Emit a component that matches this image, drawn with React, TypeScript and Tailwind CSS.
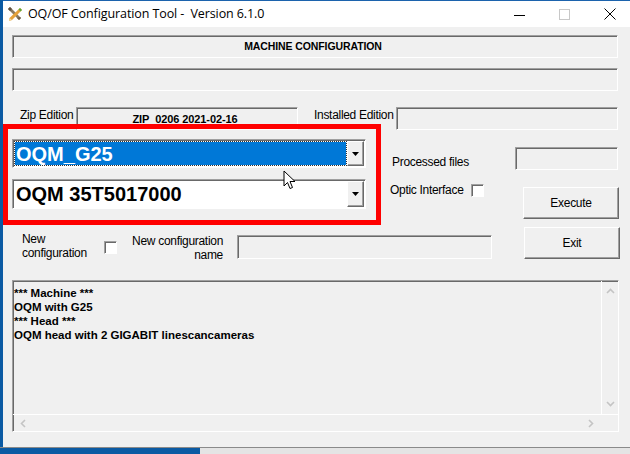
import React from "react";

const sunken =
  "border border-t-[#a0a0a0] border-l-[#a0a0a0] border-b-white border-r-white shadow-[inset_1px_1px_0_#696969]";
const raised =
  "bg-[#f0f0f0] border border-t-white border-l-white border-b-[#696969] border-r-[#696969] shadow-[inset_-1px_-1px_0_#a0a0a0]";
const label = "text-[12px] leading-[14px] tracking-[-0.3px] text-black";

function ToolIcon() {
  return (
    <svg width="17" height="17" viewBox="0 0 17 17" aria-hidden="true">
      <path d="M2 3 L4 1 L15 12 L13 14 Z" fill="#8a7b60" />
      <path d="M2 3 L4 1 L6 3 L4 5 Z" fill="#5f5040" />
      <path d="M14 2 L16 4 L6 14 L3 15 L3.5 12 Z" fill="#e6a23a" />
      <path d="M14 2 L16 4 L14.5 5.5 L12.5 3.5 Z" fill="#5aa83a" />
      <path d="M3.5 12 L6 14 L3 15 Z" fill="#f3d9a0" />
      <path d="M11 12 L13 14 L15 12 L14 11 Z" fill="#6d5c45" />
    </svg>
  );
}

function Checkbox() {
  return <div className={`w-[13px] h-[13px] bg-white ${sunken}`} />;
}

function DropButton() {
  return (
    <div
      className={`w-[17px] h-full flex items-center justify-center ${raised}`}
    >
      <svg width="7" height="4" viewBox="0 0 7 4" aria-hidden="true">
        <path d="M0 0 H7 L3.5 4 Z" fill="#000" />
      </svg>
    </div>
  );
}

function Combo({
  value,
  selected,
  h,
}: {
  value: string;
  selected?: boolean;
  h: string;
}) {
  return (
    <div className={`w-[354px] ${h} bg-white ${sunken} flex p-[1px]`}>
      <div className="flex-1 flex p-[1px]">
        <div
          className={`flex-1 flex items-center pl-[1px] font-['Liberation_Sans',Arial,sans-serif] font-bold text-[20px] ${
            selected
              ? "bg-[#0078d7] text-white outline outline-1 outline-dotted outline-[#333]"
              : "text-black"
          }`}
        >
          {value}
        </div>
      </div>
      <DropButton />
    </div>
  );
}

function Chevron({ d }: { d: string }) {
  return (
    <svg width="9" height="9" viewBox="0 0 9 9" aria-hidden="true">
      <path d={d} fill="none" stroke="#c4c4c4" strokeWidth="1.6" />
    </svg>
  );
}

function Cursor() {
  return (
    <svg
      className="absolute left-[283px] top-[170px]"
      width="13"
      height="20"
      viewBox="0 0 13 20"
      aria-hidden="true"
    >
      <path
        d="M1 1 L1 16 L4.5 12.5 L7 18.5 L9.5 17.5 L7 11.5 L12 11.5 Z"
        fill="#fff"
        stroke="#000"
        strokeWidth="1"
        strokeLinejoin="round"
      />
    </svg>
  );
}

export default function App() {
  return (
    <div className="w-[630px] h-[454px] bg-[#e4e4e4] relative overflow-hidden font-['Liberation_Sans',Arial,sans-serif]">
      <div className="flex h-[447px]">
        <div className="w-[3px] bg-[#0b5aa3]" />
        <div className="flex-1 flex flex-col border-t border-[#1c63ad]">
          {/* title bar */}
          <div className="h-[26px] bg-white flex items-center">
            <div className="ml-[3px] mt-[1px]">
              <ToolIcon />
            </div>
            <span className="ml-[5px] text-[12.5px] text-black font-['Open_Sans',sans-serif] tracking-[-0.1px]">
              OQ/OF Configuration Tool -&nbsp; Version 6.1.0
            </span>
            <div className="ml-auto flex items-center">
              <div className="w-[45px] flex justify-center">
                <div className="w-[11px] h-[1px] bg-black mt-[3px]" />
              </div>
              <div className="w-[45px] flex justify-center">
                <div className="w-[11px] h-[11px] border border-[#c8c8c8]" />
              </div>
              <div className="w-[45px] flex justify-center mr-[-2px]">
                <svg width="12" height="12" viewBox="0 0 12 12" aria-hidden="true">
                  <path d="M0.5 0.5 L11.5 11.5 M11.5 0.5 L0.5 11.5" stroke="#000" strokeWidth="1" />
                </svg>
              </div>
            </div>
          </div>

          {/* body */}
          <div className="flex-1 bg-[#f0f0f0] pl-[9px] pt-[8px] flex flex-col">
            <div className={`w-[606px] h-[23px] flex items-center justify-center ${sunken}`}>
              <span className="text-[10.5px] font-bold tracking-[-0.1px] ml-[-4px]">
                MACHINE CONFIGURATION
              </span>
            </div>
            <div className={`w-[606px] h-[23px] mt-[10px] ${sunken}`} />

            {/* editions */}
            <div className="flex mt-[16px] h-[23px]">
              <span className={`${label} ml-[8px] w-[56px] mt-[1px]`}>Zip Edition</span>
              <div className={`w-[222px] h-[23px] flex items-center justify-center ${sunken}`}>
                <span className="text-[11px] font-bold tracking-[-0.1px] mt-[1px] ml-[-4px]">
                  ZIP_0206 2021-02-16
                </span>
              </div>
              <span className={`${label} ml-[16px] w-[82px] mt-[1px]`}>Installed Edition</span>
              <div className={`w-[222px] h-[23px] ${sunken}`} />
            </div>

            {/* combos + right side */}
            <div className="flex mt-[9px] h-[80px]">
              <div className="flex flex-col w-[354px]">
                <Combo value="OQM_G25" selected h="h-[29px]" />
                <div className="mt-[11px]">
                  <Combo value="OQM 35T5017000" h="h-[30px]" />
                </div>
              </div>
              <div className="ml-[24px] w-[125px] flex flex-col">
                <span className={`${label} ml-[2px] mt-[16px]`}>Processed files</span>
                <div className="flex items-center mt-[14px]">
                  <span className={`${label} w-[81px]`}>Optic Interface</span>
                  <Checkbox />
                </div>
              </div>
              <div className="flex flex-col">
                <div className={`w-[103px] h-[23px] mt-[8px] ${sunken}`} />
                <button
                  className={`ml-[8px] mt-[17px] w-[96px] h-[32px] ${label} ${raised}`}
                >
                  Execute
                </button>
              </div>
            </div>

            {/* new configuration */}
            <div className="flex mt-[8px] h-[32px]">
              <span className={`${label} ml-[10px] w-[82px] mt-[5px]`}>
                New
                <br />
                configuration
              </span>
              <div className="mt-[14px]">
                <Checkbox />
              </div>
              <span
                className={`${label} ml-[6px] w-[100px] mt-[7px] text-right whitespace-nowrap`}
              >
                New configuration
                <br />
                name
              </span>
              <div className={`ml-[14px] mt-[8px] w-[255px] h-[24px] ${sunken}`} />
              <button className={`ml-[32px] w-[96px] h-[32px] ${label} ${raised}`}>
                Exit
              </button>
            </div>

            {/* memo */}
            <div className={`mt-[21px] w-[607px] h-[152px] ${sunken} flex flex-col`}>
              <div className="flex-1 flex min-h-0">
                <div className="flex-1 pl-[1px] pt-[5px] text-[11.5px] leading-[14px] font-bold text-black">
                  <div>*** Machine ***</div>
                  <div>OQM with G25</div>
                  <div>*** Head ***</div>
                  <div>OQM head with 2 GIGABIT linescancameras</div>
                </div>
                <div className="w-[17px] border-l border-white flex flex-col items-center justify-between py-[6px]">
                  <Chevron d="M1 6 L4.5 2.5 L8 6" />
                  <Chevron d="M1 3 L4.5 6.5 L8 3" />
                </div>
              </div>
              <div className="h-[17px] border-t border-white flex items-center">
                <div className="flex-1 flex items-center justify-between px-[6px]">
                  <Chevron d="M6 1 L2.5 4.5 L6 8" />
                  <Chevron d="M3 1 L6.5 4.5 L3 8" />
                </div>
                <div className="w-[17px]" />
              </div>
            </div>
          </div>
        </div>
      </div>

      {/* desktop strip */}
      <div className="flex h-[7px] border-t border-[#8a8a8a]">
        <div className="w-[200px] bg-[#0b5aa3]" />
        <div className="flex-1 bg-[#e4e4e4]" />
      </div>

      {/* annotation */}
      <div className="absolute left-[3px] top-[124px] w-[378px] h-[101px] border-[5px] border-[#ff0000]" />
      <Cursor />
    </div>
  );
}
